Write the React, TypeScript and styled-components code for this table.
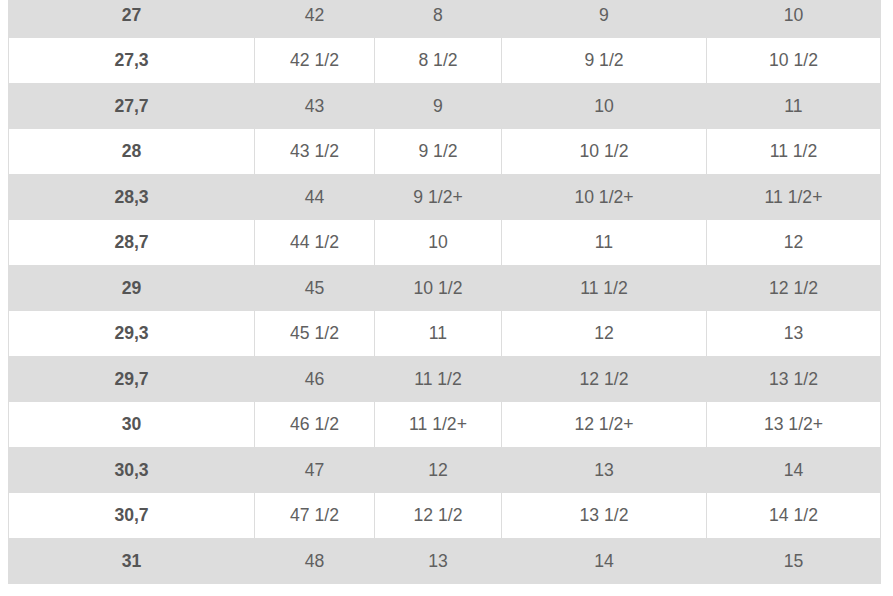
import React from "react";
import styled, { createGlobalStyle } from "styled-components";

const GlobalStyle = createGlobalStyle`
  html, body { margin: 0; padding: 0; background: #ffffff; }
  body { font-family: "Liberation Sans", Arial, sans-serif; overflow: hidden; }
`;

const Page = styled.div`
  padding: 0 8px;
`;

const Table = styled.table`
  width: 872px;
  margin-top: -8.5px;
  border-collapse: collapse;
  table-layout: fixed;
  font-size: 17.6px;
  color: #5c5c5c;
`;

const Row = styled.tr<{ $shaded: boolean }>`
  height: 45.5px;
  background: ${(p) => (p.$shaded ? "#dddddd" : "#ffffff")};
`;

const Cell = styled.td<{ $bold?: boolean }>`
  border: 1px solid #dddddd;
  padding: 1px 0 0;
  text-align: center;
  vertical-align: middle;
  font-weight: ${(p) => (p.$bold ? 700 : 400)};
  color: ${(p) => (p.$bold ? "#555555" : "#606060")};
`;

const widths = [246, 120, 127, 205, 174];

const rows: string[][] = [
  ["27", "42", "8", "9", "10"],
  ["27,3", "42 1/2", "8 1/2", "9 1/2", "10 1/2"],
  ["27,7", "43", "9", "10", "11"],
  ["28", "43 1/2", "9 1/2", "10 1/2", "11 1/2"],
  ["28,3", "44", "9 1/2+", "10 1/2+", "11 1/2+"],
  ["28,7", "44 1/2", "10", "11", "12"],
  ["29", "45", "10 1/2", "11 1/2", "12 1/2"],
  ["29,3", "45 1/2", "11", "12", "13"],
  ["29,7", "46", "11 1/2", "12 1/2", "13 1/2"],
  ["30", "46 1/2", "11 1/2+", "12 1/2+", "13 1/2+"],
  ["30,3", "47", "12", "13", "14"],
  ["30,7", "47 1/2", "12 1/2", "13 1/2", "14 1/2"],
  ["31", "48", "13", "14", "15"],
];

export default function App() {
  return (
    <>
      <GlobalStyle />
      <Page>
        <Table>
          <colgroup>
            {widths.map((w, i) => (
              <col key={i} style={{ width: w }} />
            ))}
          </colgroup>
          <tbody>
            {rows.map((r, i) => (
              <Row key={i} $shaded={i % 2 === 0}>
                {r.map((c, j) => (
                  <Cell key={j} $bold={j === 0}>
                    {c}
                  </Cell>
                ))}
              </Row>
            ))}
          </tbody>
        </Table>
      </Page>
    </>
  );
}
